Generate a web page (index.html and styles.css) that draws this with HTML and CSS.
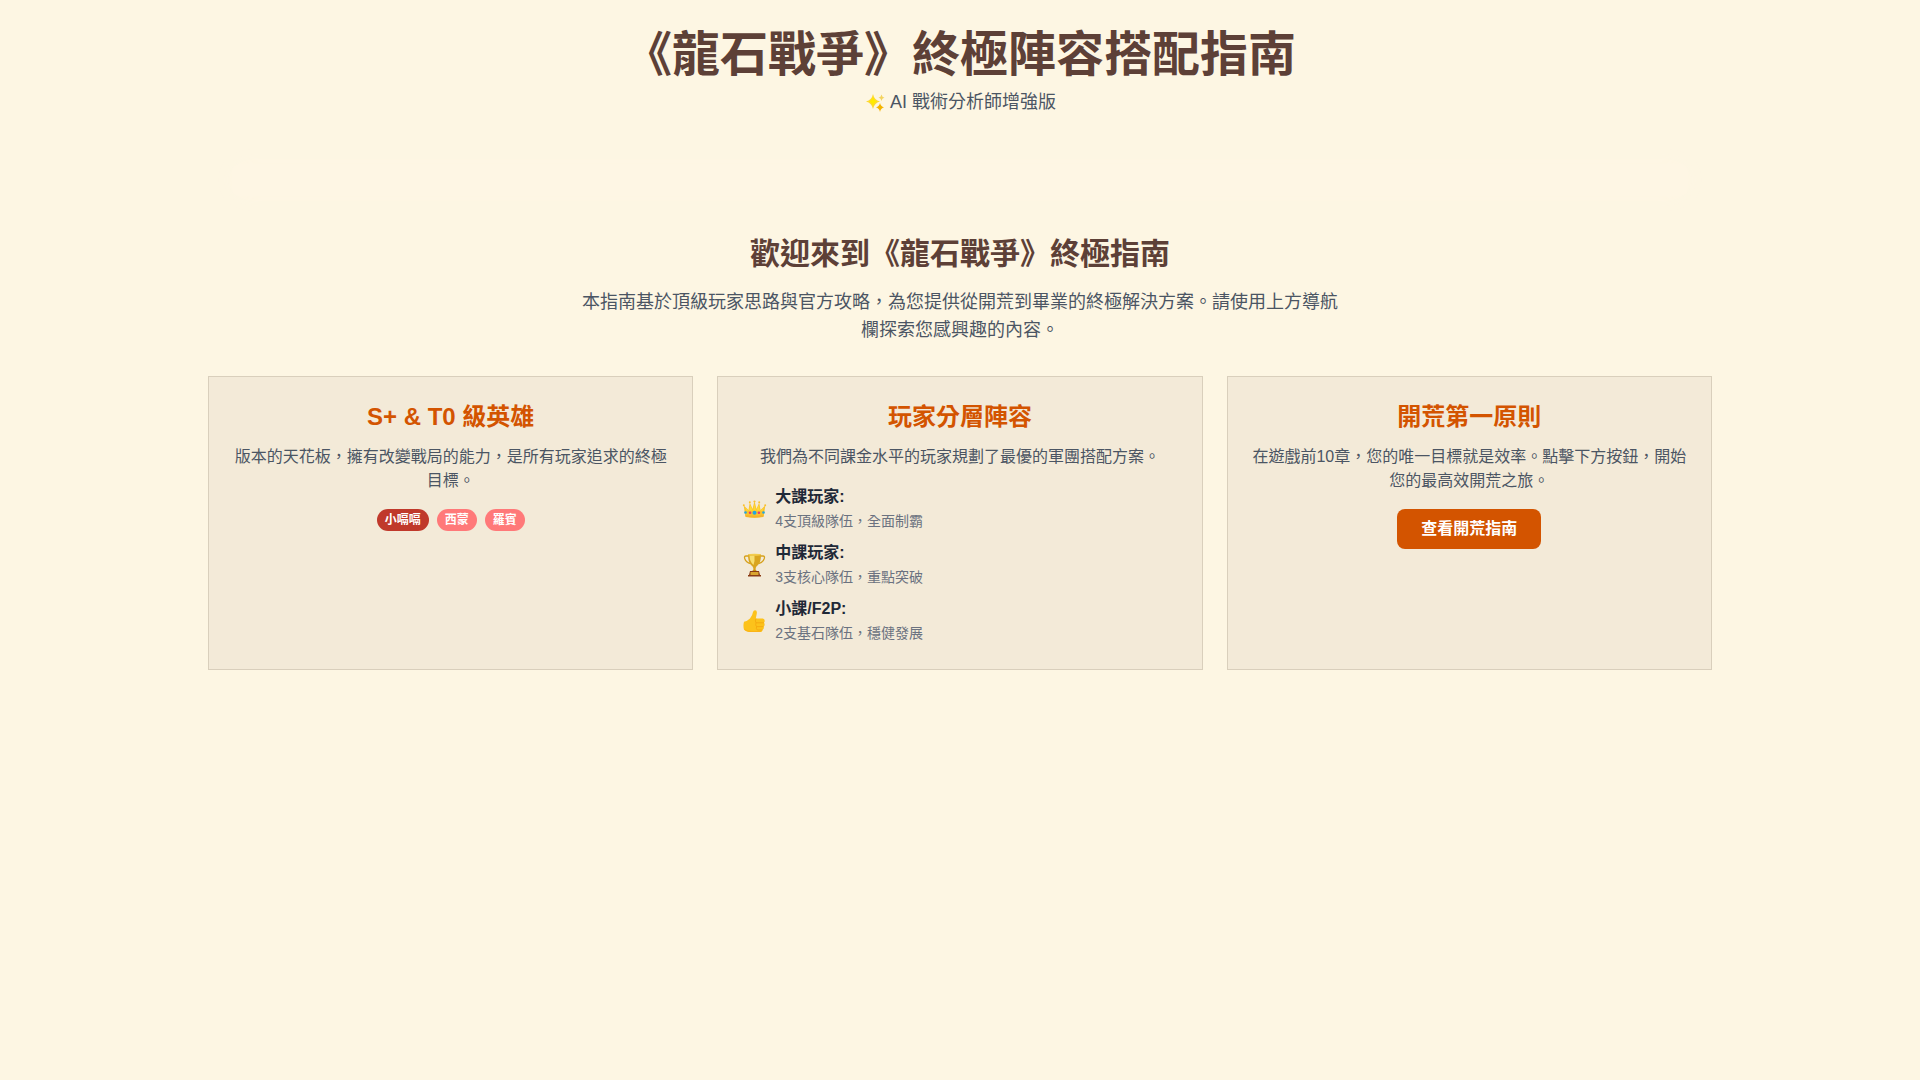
FILE: index.html
```html
<!DOCTYPE html>
<html lang="zh-Hant">
<head>
<meta charset="UTF-8">
<meta name="viewport" content="width=device-width, initial-scale=1">
<title>《龍石戰爭》終極陣容搭配指南</title>
<link rel="stylesheet" href="styles.css">
</head>
<body>
<div class="container">
  <header class="page-header">
    <h1 class="page-title">《龍石戰爭》終極陣容搭配指南</h1>
    <p class="page-subtitle">
      <svg class="sparkle" viewBox="0 0 22 22" aria-hidden="true">
        <path fill="#fdd835" d="M9 2Q10.200 8 16 9.500Q10.200 11 9 17Q7.800 11 2 9.500Q7.800 8 9 2Z"/>
        <path fill="#ffea00" d="M9 4.500Q9.900 8.600 13 9.500Q9.900 10.400 9 14.500Q8.100 10.400 5 9.500Q8.100 8.600 9 4.500Z"/>
        <path fill="#f4b400" d="M16 11Q16.700 14.400 20 15.300Q16.700 16.200 16 20Q15.300 16.200 12 15.300Q15.300 14.400 16 11Z"/>
        <path fill="#f4d35e" d="M17.500 2.500Q17.900 5 20.500 5.500Q17.900 6 17.500 9Q17.100 6 14.500 5.500Q17.100 5 17.500 2.500Z"/>
      </svg>
      AI 戰術分析師增強版
    </p>
  </header>
  <nav class="nav-bar" aria-label="導航欄"></nav>
  <main>
    <section class="intro">
      <h2 class="intro-title">歡迎來到《龍石戰爭》終極指南</h2>
      <p class="intro-text">本指南基於頂級玩家思路與官方攻略，為您提供從開荒到畢業的終極解決方案。請使用上方導航欄探索您感興趣的內容。</p>
    </section>
    <div class="cards">
      <section class="card">
        <h3 class="card-title">S+ &amp; T0 級英雄</h3>
        <p class="card-text">版本的天花板，擁有改變戰局的能力，是所有玩家追求的終極目標。</p>
        <div class="tags">
          <span class="tag tag-splus">小嗝嗝</span>
          <span class="tag tag-t0">西蒙</span>
          <span class="tag tag-t0">羅賓</span>
        </div>
      </section>
      <section class="card">
        <h3 class="card-title">玩家分層陣容</h3>
        <p class="card-text">我們為不同課金水平的玩家規劃了最優的軍團搭配方案。</p>
        <ul class="tiers">
          <li class="tier">
            <svg class="tier-icon" viewBox="0 0 24 24" aria-hidden="true">
              <path fill="#f9c22e" d="M2.800 19.500L1.200 8.500L6 13L7.300 5.500L10 12L12 4L14 12L16.700 5.500L18 13L22.800 8.500L21.200 19.500Q12 21.300 2.800 19.500Z"/>
              <path fill="#fdd835" d="M4 14L2.600 10.500L6.500 14L7.700 8L10.500 14L12 6.500L13.500 14L16.300 8L17.500 14L21.400 10.500L20 14Q12 13 4 14Z"/>
              <g fill="#fbc02d"><circle cx="1.300" cy="8.200" r="1"/><circle cx="7.300" cy="5.200" r="1"/><circle cx="12" cy="4.500" r="1.100"/><circle cx="16.700" cy="5.200" r="1"/><circle cx="22.700" cy="8.200" r="1"/></g>
              <path fill="#f5b32a" d="M3 18Q12 19.500 21 18L20.800 20Q12 21.500 3.200 20Z"/>
              <g fill="#e53975"><circle cx="7.600" cy="15.800" r="1.300"/><circle cx="16.400" cy="15.800" r="1.300"/></g>
              <g fill="#1ea7e1"><circle cx="3" cy="15.500" r="1.300"/><circle cx="12" cy="15.800" r="2"/><circle cx="21" cy="15.500" r="1.300"/></g>
            </svg>
            <div><p class="tier-name">大課玩家:</p><p class="tier-note">4支頂級隊伍，全面制霸</p></div>
          </li>
          <li class="tier">
            <svg class="tier-icon" viewBox="0 0 24 24" aria-hidden="true">
              <path fill="none" stroke="#d6a11d" stroke-width="1.300" d="M6 3H3.500Q1.500 3 2.200 5.500Q3.500 9.500 8 10.500M18 3H20.500Q22.500 3 21.800 5.500Q20.500 9.500 16 10.500"/>
              <path fill="#d9a520" d="M5.500 1.500H18.500Q18.500 9.500 15.500 12Q13.500 13.500 13.200 15V18H10.800V15Q10.500 13.500 8.500 12Q5.500 9.500 5.500 1.500Z"/>
              <path fill="#f7df72" d="M7 2.500H12Q12.500 8 11 12Q7.200 9 7 2.500Z"/>
              <ellipse cx="12" cy="1.700" rx="6.500" ry="1" fill="#f2cc4d"/>
              <path fill="#c58a12" d="M9 18.500Q12 15 15 18.500Z"/>
              <path fill="#8a3c14" d="M7.500 18H16.500L17.500 22H18.500V23.500H5.500V22H6.500Z"/>
              <rect x="8" y="19" width="8" height="3" fill="#d9a52e"/>
            </svg>
            <div><p class="tier-name">中課玩家:</p><p class="tier-note">3支核心隊伍，重點突破</p></div>
          </li>
          <li class="tier">
            <svg class="tier-icon" viewBox="0 0 24 24" aria-hidden="true">
              <path fill="#fcc21b" d="M12.500 1.300Q14.800 1.200 14.300 4.500L13.300 9.500H20.300Q22.300 10 22.200 12Q22.200 13.200 21.400 13.700Q22.300 14.500 22.100 16Q22 17.100 21 17.600Q21.600 18.500 21.200 19.600Q20.900 20.600 19.900 21Q20 23 17.500 23.100L8 23.100Q3 22.500 1.500 20.500Q.400 17 1.500 12.800Q5 12 7.500 9.500Q10 6.500 10.500 3Q11 1.400 12.500 1.300Z"/>
              <path fill="none" stroke="#f5a80f" stroke-width=".9" stroke-linecap="round" d="M13.300 10Q12.300 12 13.500 13.800H21M13.500 14Q12.500 16 14 17.600H20.700M14 17.700Q13.200 19.500 14.800 21H19.600"/>
              <path fill="#fbb416" d="M1.300 19.500Q5 22 10 22H18.500Q18.500 23 17.500 23.100H8Q3 22.600 1.300 19.500Z"/>
            </svg>
            <div><p class="tier-name">小課/F2P:</p><p class="tier-note">2支基石隊伍，穩健發展</p></div>
          </li>
        </ul>
      </section>
      <section class="card">
        <h3 class="card-title">開荒第一原則</h3>
        <p class="card-text">在遊戲前10章，您的唯一目標就是效率。點擊下方按鈕，開始您的最高效開荒之旅。</p>
        <button class="cta" type="button">查看開荒指南</button>
      </section>
    </div>
  </main>
</div>
</body>
</html>
```
FILE: styles.css
```css
*, *::before, *::after { box-sizing: border-box; }
h1, h2, h3, p, ul { margin: 0; padding: 0; }

body {
  margin: 0;
  min-height: 100vh;
  background: #fdf6e3;
  color: #1f2937;
  font-family: "Liberation Sans", "Noto Sans CJK TC", sans-serif;
  font-size: 16px;
  line-height: 24px;
}

.container { max-width: 1536px; margin: 0 auto; padding: 24px 16px; }

.page-header { text-align: center; margin-bottom: 48px; }
.page-title { color: #5d4037; font-size: 48px; line-height: 62px; font-weight: 700; }
.page-subtitle { color: #4b5563; font-size: 18px; line-height: 28px; margin-top: 2px; }
.sparkle { width: 22px; height: 22px; vertical-align: middle; }

.nav-bar {
  height: 32px;
  margin: 0 24px 40px;
  border-radius: 8px;
  background: #fef6e4;
  box-shadow: 0 0 24px #fef6e4;
}

.intro { text-align: center; margin-bottom: 32px; }
.intro-title { color: #5d4037; font-size: 30px; line-height: 36px; font-weight: 700; margin-bottom: 16px; }
.intro-text { max-width: 768px; margin: 0 auto; color: #4b5563; font-size: 18px; line-height: 28px; }

.cards { display: grid; grid-template-columns: repeat(3, 1fr); gap: 24px; }
.card {
  padding: 24px;
  border: 1px solid #d9cfbc;
  background: #f3ead8;
  text-align: center;
}
.card-title { color: #d35400; font-size: 24px; line-height: 32px; font-weight: 700; margin-bottom: 12px; }
.card-text { color: #4b5563; margin-bottom: 16px; }

.tags { display: flex; flex-wrap: wrap; justify-content: center; gap: 8px; }
.tag { padding: 3px 8px; border-radius: 999px; color: #fff; font-size: 12px; line-height: 16px; font-weight: 700; }
.tag-splus { background: #c0392b; }
.tag-t0 { background: #ff7979; }

.tiers { display: grid; gap: 8px; list-style: none; text-align: left; }
.tier { display: flex; align-items: center; gap: 8px; }
.tier-icon { flex: none; width: 25px; height: 24px; }
.tier-name { font-weight: 700; }
.tier-note { color: #6b7280; font-size: 14px; }

.cta {
  padding: 8px 24px;
  border: 0;
  border-radius: 8px;
  background: #d35400;
  color: #fff;
  font: inherit;
  font-weight: 700;
  cursor: pointer;
}

@media (max-width: 900px) {
  .cards { grid-template-columns: 1fr; }
}
```
